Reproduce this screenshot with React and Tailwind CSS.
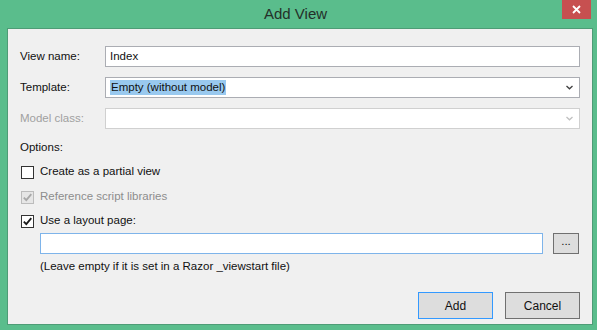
import React from "react";

const font = { fontFamily: '"Liberation Sans", Arial, sans-serif' };

function Chevron({ color }) {
  return (
    <svg width="7" height="5" viewBox="0 0 7 5" className="block">
      <path d="M0.5 1 L3.5 3.8 L6.5 1" fill="none" stroke={color} strokeWidth="1.3" />
    </svg>
  );
}

function Check({ color }) {
  return (
    <svg width="11" height="11" viewBox="0 0 11 11" className="block">
      <path d="M1.8 5.6 L4.3 8.2 L9.3 2.2" fill="none" stroke={color} strokeWidth="1.8" />
    </svg>
  );
}

function Checkbox({ checked, disabled }) {
  return (
    <div
      className={
        "w-[13px] h-[13px] flex items-center justify-center border " +
        (disabled ? "border-[#bcbcbc] bg-[#e6e6e6]" : "border-[#333333] bg-white")
      }
    >
      {checked && <Check color={disabled ? "#a8a8a8" : "#1a1a1a"} />}
    </div>
  );
}

export default function App() {
  return (
    <div
      className="w-[597px] h-[330px] bg-[#5abd8c] flex flex-col text-[11.5px] text-[#111111]"
      style={font}
    >
      {/* title bar */}
      <div className="h-[28px] flex items-start">
        <div className="flex-1" />
        <div className="text-[15px] text-[#243029] leading-[28px]">Add View</div>
        <div className="flex-1 flex justify-end pr-[6px]">
          <div className="w-[29px] h-[19px] bg-[#c75050] flex items-center justify-center">
            <svg width="9" height="9" viewBox="0 0 9 9" className="block">
              <path d="M1 1 L8 8 M8 1 L1 8" stroke="#ffffff" strokeWidth="1.8" />
            </svg>
          </div>
        </div>
      </div>

      {/* panel */}
      <div className="ml-[7px] w-[586px] h-[297px] border border-[#4e9c76] bg-[#f0f0f0] flex flex-col px-[12px] pt-[17px]">
        {/* View name */}
        <div className="flex items-center h-[21px]">
          <div className="w-[85px]">View name:</div>
          <div className="flex-1 h-[21px] bg-white border border-[#abadb3] flex items-center pl-[4px]">
            Index
          </div>
        </div>
        {/* Template */}
        <div className="flex items-center h-[21px] mt-[10px]">
          <div className="w-[85px]">Template:</div>
          <div className="flex-1 h-[21px] bg-white border border-[#abadb3] flex items-center pl-[4px] pr-[6px]">
            <span className="bg-[#99c9ef] leading-[15px] px-px">Empty (without model)</span>
            <div className="flex-1" />
            <Chevron color="#404040" />
          </div>
        </div>
        {/* Model class */}
        <div className="flex items-center h-[21px] mt-[10px]">
          <div className="w-[85px] text-[#a0a0a0]">Model class:</div>
          <div className="flex-1 h-[21px] bg-white border border-[#d0d0d0] flex items-center pr-[6px]">
            <div className="flex-1" />
            <Chevron color="#c0c0c0" />
          </div>
        </div>

        {/* Options */}
        <div className="mt-[10px] h-[16px] leading-[16px]">Options:</div>

        <div className="mt-[9px] h-[16px] flex items-center gap-[6px] pl-[1px]">
          <Checkbox />
          <span>Create as a partial view</span>
        </div>
        <div className="mt-[9px] h-[16px] flex items-center gap-[6px] pl-[1px]">
          <Checkbox checked disabled />
          <span className="text-[#8d8d8d]">Reference script libraries</span>
        </div>
        <div className="mt-[8px] h-[16px] flex items-center gap-[6px] pl-[1px]">
          <Checkbox checked />
          <span>Use a layout page:</span>
        </div>

        {/* layout input */}
        <div className="mt-[4px] flex items-center pl-[20px] gap-[10px]">
          <div className="flex-1 h-[21px] bg-white border border-[#7eb4ea]" />
          <div className="w-[26px] h-[21px] bg-[#dddddd] border border-[#707070] flex items-center justify-center leading-none pb-[3px] mr-px">
            ...
          </div>
        </div>
        <div className="mt-[4px] pl-[20px] h-[16px] leading-[16px]">
          (Leave empty if it is set in a Razor _viewstart file)
        </div>

        {/* buttons */}
        <div className="mt-[18px] flex justify-end gap-[12px]">
          <div className="w-[75px] h-[27px] bg-[#dddddd] border border-[#3399ff] flex items-center justify-center text-[12px]">
            Add
          </div>
          <div className="w-[75px] h-[27px] bg-[#dddddd] border border-[#707070] flex items-center justify-center text-[12px]">
            Cancel
          </div>
        </div>
      </div>
    </div>
  );
}
